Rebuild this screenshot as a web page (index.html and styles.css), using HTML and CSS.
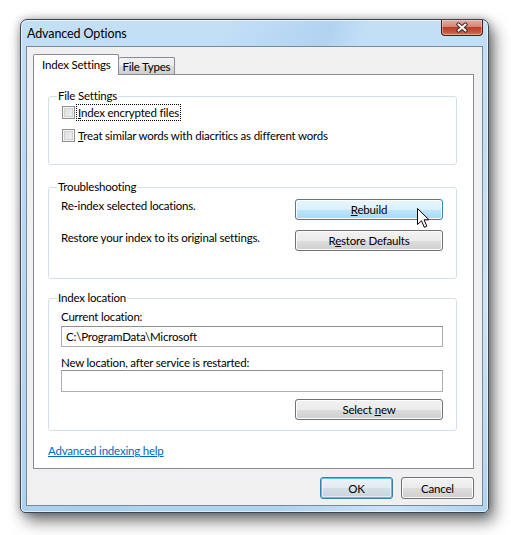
FILE: index.html
```html
<!DOCTYPE html>
<html>
<head>
<meta charset="utf-8">
<link rel="stylesheet" href="styles.css">
</head>
<body>
<div class="window">
  <div class="titlebar">
    <span class="title">Advanced Options</span>
    <span class="close">
      <svg width="14" height="11" viewBox="0 0 14 11">
        <path d="M3.5 2.5 L10.5 8.5 M10.5 2.5 L3.5 8.5" stroke="#3d2a27" stroke-width="4.2" stroke-linecap="round"/>
        <path d="M3.5 2.5 L10.5 8.5 M10.5 2.5 L3.5 8.5" stroke="#f4f4f4" stroke-width="2.2" stroke-linecap="round"/>
      </svg>
    </span>
  </div>
  <div class="client">
    <div class="tabs">
      <div class="tab active">Index Settings</div>
      <div class="tab">File Types</div>
    </div>
    <div class="panel">
      <fieldset class="group g1">
        <legend>File Settings</legend>
        <div class="check c1"><span class="box"></span><span class="focus"><u>I</u>ndex encrypted files</span></div>
        <div class="check c2"><span class="box"></span><span><u>T</u>reat similar words with diacritics as different words</span></div>
      </fieldset>
      <fieldset class="group g2">
        <legend>Troubleshooting</legend>
        <div class="row r1">
          <span class="rtext">Re-index selected locations.</span>
          <span class="btn wide hover"><span><u>R</u>ebuild</span></span>
        </div>
        <div class="row r2">
          <span class="rtext">Restore your index to its original settings.</span>
          <span class="btn wide"><span>R<u>e</u>store Defaults</span></span>
        </div>
      </fieldset>
      <fieldset class="group g3">
        <legend>Index location</legend>
        <div class="lbl l1">Current location:</div>
        <div class="input">C:\ProgramData\Microsoft</div>
        <div class="lbl l2">New location, after service is restarted:</div>
        <div class="input i2"></div>
        <div class="selrow"><span class="btn wide"><span>Select <u>n</u>ew</span></span></div>
      </fieldset>
      <div class="link">Advanced indexing help</div>
      <svg class="cursor" width="13" height="21" viewBox="0 0 13 21">
        <path d="M0.5 0.5 L0.5 16.5 L4.5 12.8 L7.3 19.3 L9.8 18.2 L7.1 11.8 L12 11.8 Z" fill="#fff" stroke="#000" stroke-width="1" stroke-linejoin="miter"/>
      </svg>
    </div>
    <div class="footer">
      <span class="btn ok"><span>OK</span></span>
      <span class="btn cancel"><span>Cancel</span></span>
    </div>
  </div>
</div>
</body>
</html>
```

FILE: styles.css
```css
html, body {
  margin: 0;
  padding: 0;
  background: #fff;
}
body {
  font-family: Lato, "Open Sans", sans-serif;
  font-size: 11.5px;
  letter-spacing: -0.2px;
  line-height: 15px;
  color: #000;
  min-height: 535px;
}
.window {
  margin: 19px 0 0 20px;
  width: 469px;
  height: 494px;
  box-sizing: border-box;
  border: 1px solid #3a4654;
  border-radius: 7px 7px 5px 5px;
  background:
    linear-gradient(115deg, rgba(255,255,255,0) 0%, rgba(255,255,255,0) 30%, rgba(160,200,235,0.5) 45%, rgba(255,255,255,0) 50%, rgba(255,255,255,0) 70%, rgba(255,255,255,0.35) 85%, rgba(255,255,255,0) 100%),
    linear-gradient(#c3dff6, #b9d9f4 30%, #aed3f1 100%);
  box-shadow: 5px 8px 16px rgba(0,0,0,0.55), 0 0 8px rgba(0,0,0,0.3), inset 0 0 0 1px rgba(255,255,255,0.6);
  display: flex;
  flex-direction: column;
}
.titlebar {
  height: 26px;
  display: flex;
  justify-content: space-between;
  align-items: flex-start;
  padding: 0 5px 0 6px;
}
.title {
  margin-top: 6px;
  font-size: 12.5px;
  letter-spacing: -0.1px;
  color: #000;
}
.close {
  width: 42px;
  height: 16px;
  box-sizing: border-box;
  border: 1px solid #4c1d17;
  border-top: none;
  border-radius: 0 0 4px 4px;
  background: linear-gradient(#e2aa9e 0%, #d58672 45%, #b9412a 50%, #c6553d 80%, #db7a5e 100%);
  display: flex;
  align-items: center;
  justify-content: center;
  box-shadow: inset 0 0 0 1px rgba(255,255,255,0.35);
}
.close svg { display: block; }
.client {
  margin: 0 5px 6px 5px;
  height: 460px;
  box-sizing: border-box;
  border: 1px solid #7b8a99;
  background: #f0f0f0;
  padding: 7px 0 0 6px;
  display: flex;
  flex-direction: column;
}
.tabs {
  display: flex;
  align-items: flex-end;
  height: 20px;
}
.tab {
  box-sizing: border-box;
  border: 1px solid #898c95;
  border-bottom: none;
  background: linear-gradient(#f3f3f3, #ebebeb 50%, #dcdcdc 51%, #cfcfcf);
  height: 17px;
  line-height: 17px;
  padding: 0 4px 0 3px;
  border-radius: 2px 2px 0 0;
}
.tab.active {
  background: #fff;
  height: 21px;
  line-height: 20px;
  padding: 0 8px 0 8px;
  margin-bottom: -1px;
  position: relative;
  z-index: 1;
}
.tab.active + .tab { border-left: none; }
.panel {
  width: 441px;
  height: 395px;
  box-sizing: border-box;
  border: 1px solid #898c95;
  background: #fff;
  padding: 13px 16px 0 14px;
  position: relative;
}
.group {
  margin: 0;
  border: 1px solid #d5dfe5;
  border-radius: 3px;
  padding: 0 13px 0 12px;
  min-width: 0;
}
.group legend {
  padding: 0 1px;
  margin-left: -4px;
  line-height: 16px;
  color: #000;
}
.g1 { padding-top: 1px; padding-bottom: 21px; }
.check {
  display: flex;
  align-items: center;
  height: 15px;
  margin-left: 1px;
}
.c2 { margin-top: 8px; }
.box {
  width: 13px;
  height: 13px;
  box-sizing: border-box;
  border: 1px solid #8f8f8f;
  background: linear-gradient(135deg, #dcdcdc, #f2f2f2);
  box-shadow: inset 0 0 0 1px #f5f5f5, inset 0 0 0 2px #d0d0d0;
  margin-right: 3px;
  flex: none;
}
.focus {
  outline: 1px dotted #000;
  outline-offset: 0;
  padding: 0 1px;
  margin-left: -1px;
}
.g2 { margin-top: 14px; padding-top: 3px; padding-bottom: 27px; }
.row {
  display: flex;
  justify-content: space-between;
  align-items: flex-start;
}
.r2 { margin-top: 10px; }
.btn {
  box-sizing: border-box;
  height: 21px;
  border: 1px solid #707070;
  border-radius: 3px;
  background: linear-gradient(#f2f2f2 0%, #ebebeb 50%, #dddddd 51%, #cfcfcf 100%);
  box-shadow: inset 0 0 0 1px #fcfcfc;
  display: flex;
  align-items: center;
  justify-content: center;
  line-height: 15px;
  color: #000;
}
.btn.wide { width: 148px; }
.r1 .btn { margin-top: 1px; }
.btn.hover {
  border-color: #3c7fb1;
  background: linear-gradient(#eaf6fd 0%, #d9f0fc 50%, #bee6fd 51%, #a7d9f5 100%);
}
.g3 { margin-top: 11px; padding-top: 3px; padding-bottom: 10px; }
.lbl { height: 15px; }
.input {
  margin-top: 2px;
  height: 21px;
  box-sizing: border-box;
  border: 1px solid #abadb3;
  border-top-color: #8e8f8f;
  background: #fff;
  padding: 2px 4px;
  line-height: 15px;
}
.l2 { margin-top: 8px; }
.i2 { margin-top: 0; height: 22px; }
.selrow {
  display: flex;
  justify-content: flex-end;
  margin-top: 7px;
}
.link {
  margin-top: 12px;
  color: #0066cc;
  text-decoration: underline;
  width: max-content;
}
.cursor {
  position: absolute;
  left: 383px;
  top: 133px;
}
.footer {
  display: flex;
  justify-content: flex-end;
  gap: 8px;
  padding-right: 8px;
  margin-top: 8px;
}
.btn.ok, .btn.cancel { width: 73px; height: 22px; }
.btn.ok {
  border-color: #3c7fb1;
  box-shadow: inset 0 0 0 1px #4fc3f0, inset 0 0 0 2px rgba(255,255,255,0.5);
  background: linear-gradient(#edf3f7 0%, #e3ebf0 50%, #d4dfe6 51%, #c7d4dc 100%);
}
```
